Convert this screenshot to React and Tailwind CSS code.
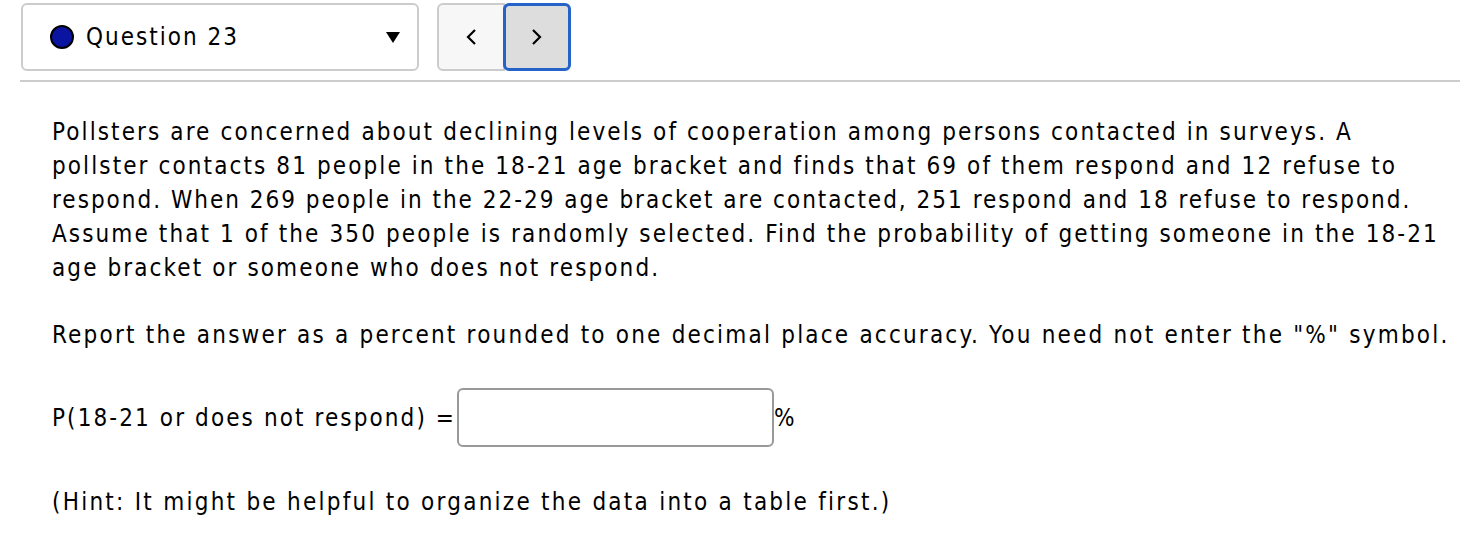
import React from "react";

export default function App() {
  const font = { fontFamily: '"DejaVu Sans Condensed", "DejaVu Sans", sans-serif', fontStretch: "condensed" };
  return (
    <div className="w-[1460px] h-[534px] bg-white text-black overflow-hidden" style={font}>
      <div className="pt-[3px] pl-[21px]">
        <div className="flex items-start gap-[18px]">
          <div className="w-[398px] h-[68px] border-2 border-[#cccccc] rounded-[6px] bg-white flex items-center pl-[27px] pr-[18px]">
            <span className="w-[24px] h-[24px] rounded-full bg-[#0a14a0] border-[2.5px] border-black shrink-0"></span>
            <span className="ml-[12px] text-[24px] leading-none tracking-[2px] flex-1">Question 23</span>
            <svg width="14" height="11" viewBox="0 0 14 11" className="-mr-[1px]"><polygon points="0,0 14,0 7,11" fill="#000" /></svg>
          </div>
          <div className="flex h-[68px]">
            <div className="w-[68px] h-[68px] border-2 border-[#cccccc] rounded-l-[6px] bg-[#f7f7f7] flex items-center justify-center">
              <svg width="14" height="18" viewBox="0 0 14 18"><polyline points="11,2 4,9 11,16" fill="none" stroke="#000" strokeWidth="2.2" /></svg>
            </div>
            <div className="w-[68px] h-[68px] border-[3.5px] border-[#2563c9] rounded-[6px] bg-[#dddddd] flex items-center justify-center -ml-[2px]">
              <svg width="14" height="18" viewBox="0 0 14 18"><polyline points="3,2 10,9 3,16" fill="none" stroke="#000" strokeWidth="2.2" /></svg>
            </div>
          </div>
        </div>
        <div className="mt-[9px] h-[2px] bg-[#cccccc] -ml-[1px]"></div>
      </div>
      <div className="pl-[52px] pt-[33px] text-[24px] leading-[34px] tracking-[2.1px]">
        <p>
          Pollsters are concerned about declining levels of cooperation among persons contacted in surveys. A<br />
          pollster contacts 81 people in the 18-21 age bracket and finds that 69 of them respond and 12 refuse to<br />
          <span className="tracking-[2px]">respond. When 269 people in the 22-29 age bracket are contacted, 251 respond and 18 refuse to respond.</span><br />
          Assume that 1 of the 350 people is randomly selected. Find the probability of getting someone in the 18-21<br />
          age bracket or someone who does not respond.
        </p>
        <p className="mt-[33px] whitespace-nowrap tracking-[2.2px]">Report the answer as a percent rounded to one decimal place accuracy. You need not enter the "%" symbol.</p>
        <div className="mt-[36px] flex items-center h-[59px]">
          <span className="whitespace-nowrap">P(18-21 or does not respond) =</span>
          <span className="ml-[1px] w-[317px] h-[59px] border-2 border-[#999999] rounded-[6px] bg-white shrink-0"></span>
          <span>%</span>
        </div>
        <p className="mt-[38px] tracking-[2.25px]">(Hint: It might be helpful to organize the data into a table first.)</p>
      </div>
    </div>
  );
}
